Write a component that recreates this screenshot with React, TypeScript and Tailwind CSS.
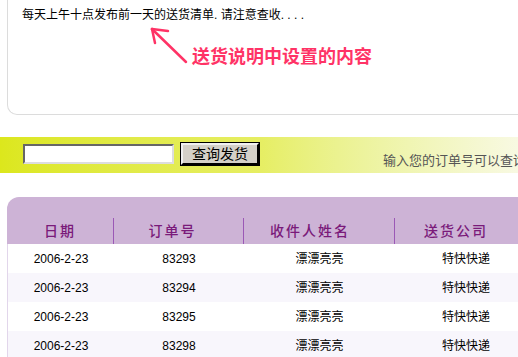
import React from "react";

const ROWS = [
  { date: "2006-2-23", no: "83293", name: "漂漂亮亮", company: "特快快递" },
  { date: "2006-2-23", no: "83294", name: "漂漂亮亮", company: "特快快递" },
  { date: "2006-2-23", no: "83295", name: "漂漂亮亮", company: "特快快递" },
  { date: "2006-2-23", no: "83298", name: "漂漂亮亮", company: "特快快递" },
];

const FONT = { fontFamily: '"Liberation Sans", "Noto Sans CJK SC", sans-serif' };

export default function App() {
  return (
    <div className="w-[518px] h-[357px] overflow-hidden bg-white text-black" style={FONT}>
      {/* delivery note panel */}
      <div className="ml-[7px] h-[115px] border-l border-b border-[#dcdcdc] rounded-bl-[10px] pl-[14px] pt-[8px]">
        <p className="text-[12px] leading-[14px] whitespace-nowrap">
          每天上午十点发布前一天的送货清单. 请注意查收. . . .
        </p>
        <div className="flex items-start mt-[5px]">
          <svg className="ml-[126px] shrink-0" width="42" height="40" viewBox="0 0 42 40">
            <g stroke="#ff3366" strokeWidth="2.5" strokeLinecap="round" fill="none">
              <line x1="4" y1="2" x2="38" y2="35" />
              <line x1="4" y1="2" x2="20" y2="4" />
              <line x1="4" y1="2" x2="7" y2="16" />
            </g>
          </svg>
          <span className="mt-[19px] ml-[2px] text-[18px] leading-[22px] font-bold text-[#ff3366] whitespace-nowrap">
            送货说明中设置的内容
          </span>
        </div>
      </div>

      {/* search band */}
      <div className="mt-[22px] h-[36px] flex items-start bg-gradient-to-r from-[#dce71c] via-[#e6ee62] to-[#f8f9e2]">
        <input
          type="text"
          className="shrink-0 ml-[23px] mt-[7px] w-[151px] h-[20px] bg-white border-2 border-t-[#666] border-l-[#666] border-b-[#ddd] border-r-[#ddd] outline-none"
        />
        <button className="shrink-0 ml-[7px] mt-[6px] w-[78px] h-[22px] bg-[#d4d0c8] border-2 border-t-[#f0f0f0] border-l-[#f0f0f0] border-b-black border-r-black outline outline-1 outline-black text-[14px] leading-[16px] text-black">
          查询发货
        </button>
        <span className="shrink-0 ml-[124px] self-end mb-[5px] text-[13px] leading-[15px] text-[#555] whitespace-nowrap">
          输入您的订单号可以查询
        </span>
      </div>

      {/* order list */}
      <div className="mt-[24px] ml-[7px] w-[560px]">
        <div className="h-[47px] flex items-end bg-[#cdb3d6] rounded-tl-[12px] text-[14px] font-medium tracking-[2px] text-[#7a1a7a]">
          <div className="w-[107px] h-[26px] flex items-center justify-center border-r border-[#9b59b6]">日期</div>
          <div className="w-[130px] h-[26px] flex items-center justify-center pr-[12px] border-r border-[#9b59b6]">订单号</div>
          <div className="w-[151px] h-[26px] flex items-center justify-center pr-[18px] border-r border-[#9b59b6]">收件人姓名</div>
          <div className="w-[142px] h-[26px] flex items-center justify-center pr-[20px]">送货公司</div>
        </div>
        {ROWS.map((r, i) => (
          <div
            key={r.no}
            className={`h-[29px] flex items-center text-[12px] border-l border-[#e2d6eb] ${i % 2 ? "bg-[#f8f6fc]" : "bg-white"}`}
          >
            <div className="w-[106px] text-center">{r.date}</div>
            <div className="w-[130px] text-center">{r.no}</div>
            <div className="w-[151px] text-center">{r.name}</div>
            <div className="w-[142px] text-center">{r.company}</div>
          </div>
        ))}
      </div>
    </div>
  );
}
